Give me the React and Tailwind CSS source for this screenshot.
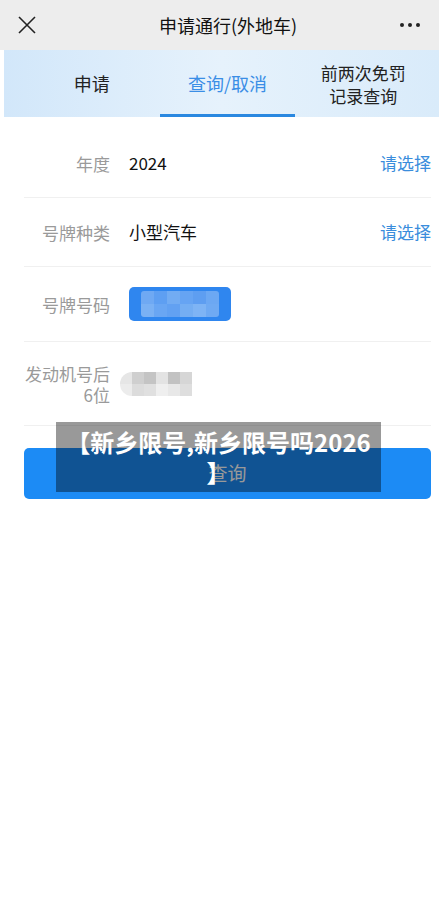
import React from 'react';

const font = { fontFamily: '"Noto Sans CJK SC", "Noto Sans", sans-serif' };

const plateCells = [
  '#7fb2f4', '#6aa6f3', '#83b6f5', '#74acf4', '#6aa4f2', '#7cb1f5',
  '#8dbcf6', '#78aff4', '#6fa8f3', '#86b8f5', '#92c0f7', '#80b4f5',
];

const engineCells = [
  '#e6e6e6', '#cfcfcf', '#c4c4c4', '#e3e3e3', '#c2c2c2', '#d6d6d6',
  '#ececec', '#dcdcdc', '#e0e0e0', '#efefef', '#e8e8e8', '#dedede',
];

function FormRow({ label, height, children, right }) {
  return (
    <div className={`flex items-center border-b border-[#f0f0f0] ${height}`}>
      <div className="w-[86px] shrink-0 text-right text-[17px] leading-[21px] text-[#9a9a9a]">{label}</div>
      <div className="ml-[19px] flex-1 flex items-center">{children}</div>
      {right && <div className="text-[17px] text-[#3a8ddc]">{right}</div>}
    </div>
  );
}

export default function App() {
  return (
    <div className="relative w-[439px] min-h-[915px] bg-white" style={font}>
      {/* top bar */}
      <div className="h-[50px] bg-[#ededed] flex items-center justify-between px-[18px]">
        <svg width="18" height="18" viewBox="0 0 18 18" className="text-[#222]">
          <path d="M1 1 L17 17 M17 1 L1 17" stroke="currentColor" strokeWidth="1.6" fill="none" />
        </svg>
        <div className="pl-[20px] text-[18px] text-[#111]">申请通行(外地车)</div>
        <div className="flex gap-[4px] pr-[1px]">
          <span className="w-[4px] h-[4px] rounded-full bg-[#222]" />
          <span className="w-[4px] h-[4px] rounded-full bg-[#222]" />
          <span className="w-[4px] h-[4px] rounded-full bg-[#222]" />
        </div>
      </div>

      {/* tabs */}
      <div className="ml-[4px] h-[67px] pl-[20px] pr-[8px] flex bg-gradient-to-r from-[#d2e7fa] via-[#e6f2fc] to-[#d9ebfa]">
        <div className="flex-1 flex items-center justify-center text-[18px] text-[#222]">申请</div>
        <div className="flex-1 relative flex items-center justify-center text-[18px] text-[#3a8ee6]">
          查询/取消
          <div className="absolute bottom-0 left-0 right-0 h-[3px] bg-[#2a88e0]" />
        </div>
        <div className="flex-1 flex flex-col items-center justify-center text-[17px] leading-[23px] text-[#222]">
          <span>前两次免罚</span>
          <span>记录查询</span>
        </div>
      </div>

      {/* form */}
      <div className="pl-[24px] pr-[8px] pt-[12px]">
        <FormRow label="年度" height="h-[69px]" right="请选择">
          <span className="text-[17px] text-[#111]">2024</span>
        </FormRow>
        <FormRow label="号牌种类" height="h-[69px]" right="请选择">
          <span className="text-[17px] text-[#111]">小型汽车</span>
        </FormRow>
        <FormRow label="号牌号码" height="h-[75px]">
          <div className="w-[102px] h-[34px] rounded-[5px] bg-[#2f86ef] flex items-center justify-center">
            <div className="grid grid-cols-6 w-[78px] h-[26px] rounded-[3px] overflow-hidden opacity-80">
              {plateCells.map((c, i) => (
                <span key={i} style={{ backgroundColor: c }} />
              ))}
            </div>
          </div>
        </FormRow>
        <FormRow label="发动机号后6位" height="h-[84px]">
          <div className="-ml-[9px] grid grid-cols-6 w-[72px] h-[24px] rounded-l-full rounded-r-[4px] overflow-hidden">
            {engineCells.map((c, i) => (
              <span key={i} style={{ backgroundColor: c }} />
            ))}
          </div>
        </FormRow>

        <button className="mt-[22px] w-full h-[51px] rounded-[5px] bg-[#1c8bf5] text-white text-[19px]">
          查询
        </button>
      </div>

      {/* overlay caption */}
      <div className="absolute left-[56px] top-[422px] w-[325px] py-[5px] bg-black/40 text-white text-center font-bold text-[24px] leading-[30px]">
        <div className="whitespace-nowrap">【新乡限号,新乡限号吗2026</div>
        <div>】</div>
      </div>
    </div>
  );
}
